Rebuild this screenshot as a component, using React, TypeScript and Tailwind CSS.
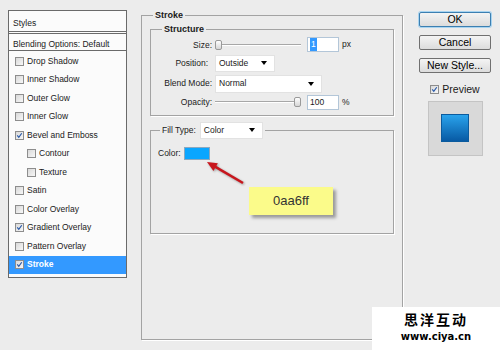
import type { ReactNode } from 'react'

type CheckProps = { checked?: boolean }

function Check({ checked }: CheckProps) {
  return (
    <span className="flex h-[9px] w-[9px] shrink-0 items-center justify-center border border-[#8d8d8d] bg-linear-to-br from-[#d9d9d9] to-[#f7f7f7]">
      {checked && (
        <svg width="9" height="9" viewBox="0 0 9 9">
          <path d="M1.6 4.4 L3.6 6.8 L7.4 1.6" fill="none" stroke="#2456a8" strokeWidth="1.5" />
        </svg>
      )}
    </span>
  )
}

type StyleRowProps = { label: string; checked?: boolean; indent?: boolean; active?: boolean }

function StyleRow({ label, checked, indent, active }: StyleRowProps) {
  return (
    <div
      className={
        active
          ? 'flex h-[18.5px] items-center gap-[3px] bg-[#3399ff] pl-[6px] font-bold text-white'
          : indent
            ? 'flex h-[18.5px] items-center gap-[3px] pl-[18px]'
            : 'flex h-[18.5px] items-center gap-[3px] pl-[6px]'
      }
    >
      <Check checked={checked} />
      <span>{label}</span>
    </div>
  )
}

type SelectProps = { value: string; className: string }

function Select({ value, className }: SelectProps) {
  return (
    <div className={`flex items-center justify-between border border-[#e2e2e2] bg-white pr-[7px] pl-[3px] ${className}`}>
      <span>{value}</span>
      <span className="h-0 w-0 border-x-[3.5px] border-t-[4px] border-x-transparent border-t-black" />
    </div>
  )
}

function Slider({ thumbRight }: { thumbRight?: boolean }) {
  return (
    <div className="relative flex h-full w-[86px] items-center">
      <div className="h-[2px] w-full border-t border-[#a7a7a7] bg-white" />
      <span
        className={
          thumbRight
            ? 'absolute top-1/2 right-0 h-[10px] w-[7px] -translate-y-1/2 rounded-[2px] border border-[#9a9a9a] bg-linear-to-b from-white to-[#d6d6d6]'
            : 'absolute top-1/2 left-0 h-[10px] w-[7px] -translate-y-1/2 rounded-[2px] border border-[#9a9a9a] bg-linear-to-b from-white to-[#d6d6d6]'
        }
      />
    </div>
  )
}

function Field({ children }: { children: ReactNode }) {
  return (
    <div className="flex h-full w-[32px] items-center border border-[#b3c6d8] bg-white pl-[2px]">{children}</div>
  )
}

function Button({ label, primary }: { label: string; primary?: boolean }) {
  return (
    <button
      type="button"
      className={
        primary
          ? 'h-[15px] w-[72px] rounded-[2px] border border-[#3c7fb1] bg-linear-to-b from-[#f4f4f4] to-[#dcdcdc] text-[10.5px] leading-[13px] text-black shadow-[0_0_0_1px_#a8d4f0]'
          : 'h-[15px] w-[72px] rounded-[2px] border border-[#707070] bg-linear-to-b from-[#f4f4f4] to-[#dcdcdc] text-[10.5px] leading-[13px] text-black'
      }
    >
      {label}
    </button>
  )
}

export default function App() {
  return (
    <div className="relative flex h-[350px] w-[500px] overflow-hidden bg-[#ececec] font-['Liberation_Sans',Arial,sans-serif] text-[8.5px] text-[#1a1a1a]">
      <div className="mt-[10px] ml-[8px] h-[268px] w-[119px] shrink-0 border border-[#6a6a6a] bg-[#fbfbfb]">
        <div className="h-[23px] border-b-[3px] border-double border-[#6a6a6a] pt-[6px] pl-[4px]">Styles</div>
        <div className="h-[17px] border-b border-[#6a6a6a] pt-[4px] pl-[4px]">Blending Options: Default</div>
        <div className="pt-[1px]">
          <StyleRow label="Drop Shadow" />
          <StyleRow label="Inner Shadow" />
          <StyleRow label="Outer Glow" />
          <StyleRow label="Inner Glow" />
          <StyleRow label="Bevel and Emboss" checked />
          <StyleRow label="Contour" indent />
          <StyleRow label="Texture" indent />
          <StyleRow label="Satin" />
          <StyleRow label="Color Overlay" />
          <StyleRow label="Gradient Overlay" checked />
          <StyleRow label="Pattern Overlay" />
          <StyleRow label="Stroke" checked active />
        </div>
      </div>

      <fieldset className="mt-[9.5px] ml-[14px] h-[330px] w-[261px] shrink-0 border border-[#a3a3a3] px-[8px] shadow-[1px_1px_0_#fff]">
        <legend className="ml-[3px] bg-[#ececec] px-[2px] text-[9px] leading-[11px] font-bold">Stroke</legend>

        <fieldset className="mt-[3px] h-[92px] w-[244px] border border-[#a3a3a3] p-0 shadow-[1px_1px_0_#fff]">
          <legend className="ml-[11px] bg-[#ececec] px-[2px] text-[9px] leading-[11px] font-bold">Structure</legend>
          <div className="grid grid-cols-[61px_auto] items-center gap-x-[3px] pt-[2px]">
            <span className="h-[16px] text-right leading-[16px]">Size:</span>
            <div className="flex h-[16px] items-center">
              <Slider />
              <div className="ml-[6px] h-[15px]">
                <Field>
                  <span className="bg-[#3399ff] px-[1px] text-white">1</span>
                </Field>
              </div>
              <span className="ml-[3px]">px</span>
            </div>

            <span className="mt-[2px] pr-[4px] text-right">Position:</span>
            <div className="mt-[2px] h-[17px]">
              <Select value="Outside" className="h-full w-[60px]" />
            </div>

            <span className="mt-[3px] text-right">Blend Mode:</span>
            <div className="mt-[3px] h-[18px]">
              <Select value="Normal" className="h-full w-[107px]" />
            </div>

            <span className="mt-[2px] text-right">Opacity:</span>
            <div className="mt-[2px] flex h-[15px] items-center">
              <Slider thumbRight />
              <div className="ml-[6px] h-[15px]">
                <Field>100</Field>
              </div>
              <span className="ml-[3px]">%</span>
            </div>
          </div>
        </fieldset>

        <fieldset className="mt-[6px] h-[112px] w-[244px] border border-[#a3a3a3] p-0 shadow-[1px_1px_0_#fff]">
          <legend className="ml-[9px] flex items-center bg-[#ececec] px-[2px]">
            <span className="mr-[4px]">Fill Type:</span>
            <Select value="Color" className="h-[17px] w-[63px]" />
          </legend>
          <div className="flex items-center pt-[8px] pl-[7px]">
            <span className="mr-[3px]">Color:</span>
            <span className="h-[13px] w-[26px] border border-[#8aa8c0] bg-[#0aa6ff]" />
          </div>
        </fieldset>
      </fieldset>

      <div className="mt-[12px] ml-[16px] flex w-[72px] shrink-0 flex-col items-center">
        <Button label="OK" primary />
        <div className="mt-[8px]">
          <Button label="Cancel" />
        </div>
        <div className="mt-[8px]">
          <Button label="New Style..." />
        </div>
        <div className="mt-[9px] flex items-center gap-[3px] text-[10.5px]">
          <Check checked />
          <span>Preview</span>
        </div>
        <div className="mt-[3px] flex h-[55px] w-[55px] items-center justify-center border border-[#c4c4c4] bg-[#d9d9d9]">
          <div className="h-[28px] w-[28px] border border-[#0b5b9e] bg-linear-to-b from-[#2aa3ec] to-[#085aa4]" />
        </div>
      </div>

      <svg className="absolute top-[155px] left-[200px]" width="50" height="35" viewBox="0 0 50 35">
        <g style={{ filter: 'drop-shadow(1px 1px 1px rgba(0,0,0,.35))' }}>
          <line x1="15" y1="11.7" x2="43" y2="28" stroke="#c8161d" strokeWidth="2.6" />
          <polygon points="7,7 13.4,15.9 17.9,8.2" fill="#c8161d" />
        </g>
      </svg>

      <div className="absolute top-[187px] left-[249px] flex h-[28px] w-[84px] items-center justify-center bg-[#fbfb8a] text-[13px] text-[#333] shadow-[3px_3px_3px_rgba(0,0,0,.35)]">
        0aa6ff
      </div>

      <div className="absolute right-0 bottom-0 flex h-[43px] w-[128px] flex-col items-center bg-white pt-[5px]">
        <span className="font-['Noto_Sans_CJK_SC',sans-serif] text-[14px] leading-none font-bold tracking-[2px] text-black">思洋互动</span>
        <span className="mt-[6px] font-['DejaVu_Sans',sans-serif] text-[10px] leading-none font-bold text-black">www.ciya.cn</span>
      </div>
    </div>
  )
}
